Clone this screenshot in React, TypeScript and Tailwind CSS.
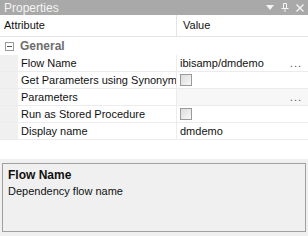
import React from "react";

const Check = () => (
  <div className="w-[12px] h-[12px] border border-[#9a9a9a] bg-gradient-to-br from-[#dcdcdc] to-[#f8f8f8]" />
);

const Row = ({ label, children, shade }: { label: string; children?: React.ReactNode; shade?: boolean }) => (
  <div className="flex h-[17px] border-b border-[#ececec]">
    <div className="w-[18px] bg-[#f0f0f0]" />
    <div className="w-[159px] pl-[3px] flex items-center overflow-hidden whitespace-nowrap border-r border-[#ececec]">{label}</div>
    <div className={`flex-1 flex items-center pl-[3px] pr-[6px] ${shade ? "bg-[#f7f7f7]" : ""}`}>{children}</div>
  </div>
);

export default function App() {
  return (
    <div
      className="w-[308px] h-[236px] bg-[#f0f0f0] flex flex-col text-[11px] text-[#111] overflow-hidden"
      style={{ fontFamily: '"Liberation Sans", Arial, sans-serif' }}
    >
      <div className="h-[15px] bg-[#a9a9a9] flex items-center justify-between pl-[4px] pr-[4px]">
        <span className="text-[#f4f4f4] text-[12px] leading-none">Properties</span>
        <div className="flex items-center gap-[7px] text-[#f4f4f4]">
          <svg width="8" height="5" viewBox="0 0 8 5"><path d="M0 0h8L4 5z" fill="#f4f4f4" /></svg>
          <svg width="8" height="9" viewBox="0 0 8 9" fill="none" stroke="#f4f4f4" strokeWidth="1">
            <path d="M2.5 0.5v5M5.5 0.5v5M2.5 0.5h3M0.5 5.5h7M4 5.5v3.5" />
          </svg>
          <svg width="8" height="8" viewBox="0 0 8 8" stroke="#f4f4f4" strokeWidth="1.4"><path d="M0.5 0.5l7 7M7.5 0.5l-7 7" /></svg>
        </div>
      </div>
      <div className="bg-white flex flex-col h-[144px]">
        <div className="flex h-[22px] border-b border-[#e4e4e4]">
          <div className="w-[177px] pl-[4px] flex items-center border-r border-[#e4e4e4]">Attribute</div>
          <div className="flex-1 pl-[6px] flex items-center">Value</div>
        </div>
        <div className="flex h-[18px] items-center">
          <div className="w-[18px] flex items-center justify-center">
            <div className="w-[9px] h-[9px] border border-[#9a9a9a] flex items-center justify-center">
              <div className="w-[5px] h-[1px] bg-[#555]" />
            </div>
          </div>
          <span className="pl-[2px] font-bold text-[#6d6d6d] text-[12px]">General</span>
        </div>
        <Row label="Flow Name">
          <span className="flex-1">ibisamp/dmdemo</span>
          <span className="text-[#555] tracking-[1px]">...</span>
        </Row>
        <Row label="Get Parameters using Synonym"><Check /></Row>
        <Row label="Parameters" shade>
          <span className="flex-1" />
          <span className="text-[#555] tracking-[1px]">...</span>
        </Row>
        <Row label="Run as Stored Procedure"><Check /></Row>
        <Row label="Display name">dmdemo</Row>
      </div>
      <div className="pt-[4px] px-[2px] pb-[4px] flex-1 flex">
        <div className="flex-1 border border-[#a0a0a0] bg-[#f0f0f0] pl-[5px] pt-[3px]">
          <div className="font-bold text-[12px] leading-[16px]">Flow Name</div>
          <div className="leading-[16px]">Dependency flow name</div>
        </div>
      </div>
    </div>
  );
}
